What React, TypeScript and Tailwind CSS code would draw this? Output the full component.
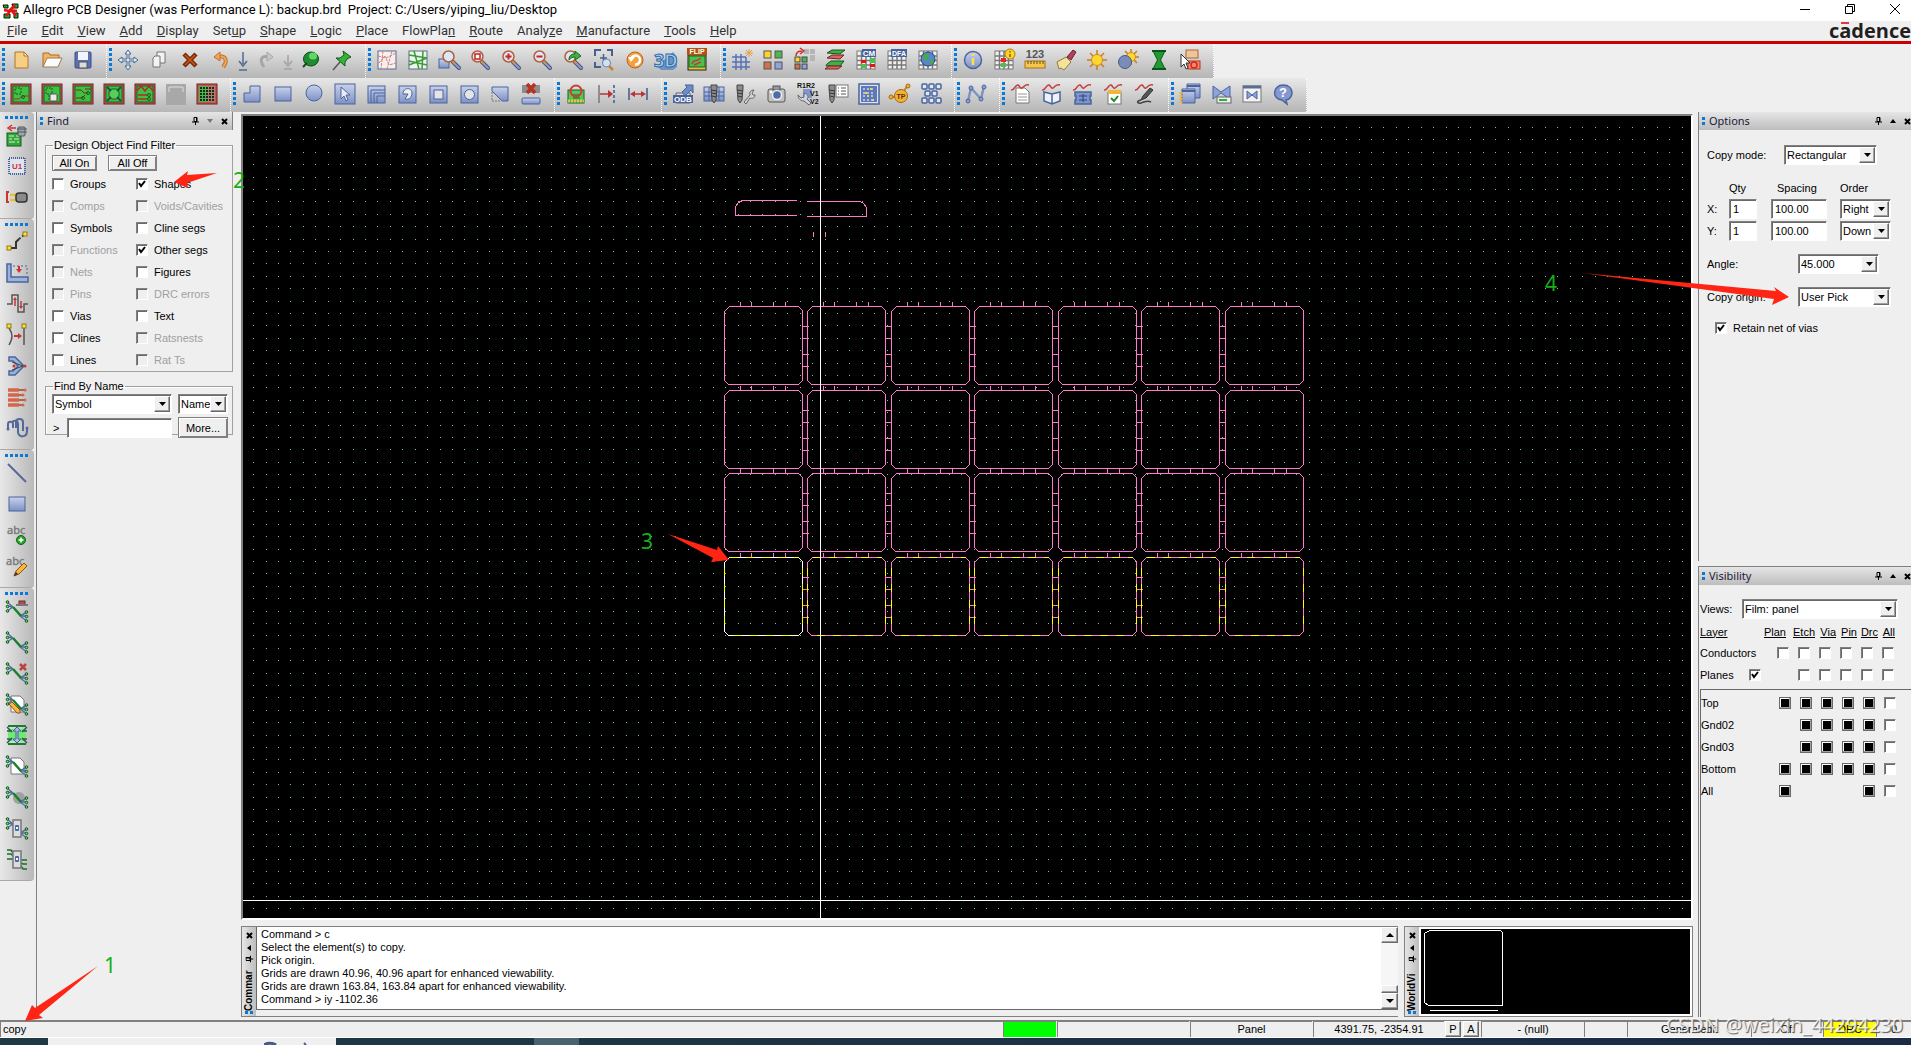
import React from "react";

type Glyph = React.ReactNode;

/* ------------------------------------------------------------------ */
/* Toolbar drawings, all on a 24x24 grid                               */
/* ------------------------------------------------------------------ */

const EDGE = "#4a659c";

const Magnifier = ({ children }: { children?: Glyph }) => (
  <>
    <path d="M14 14l6 6" stroke="#46557c" strokeWidth="4" strokeLinecap="round" />
    <path d="M14 14l6 6" stroke="#8d9ccc" strokeWidth="2" strokeLinecap="round" />
    <path d="M13 13l3 3" stroke="#e0903a" strokeWidth="2" />
    <circle cx="9.500" cy="8.500" r="5.500" fill="#dde6f6" stroke="#b3603a" strokeWidth="1.500" />
    {children}
  </>
);

const Board = ({ children }: { children?: Glyph }) => (
  <>
    <rect x="2" y="2" width="20" height="20" fill="#c25454" stroke="#6e2222" />
    <rect x="4" y="4" width="16" height="16" fill="#3fbf43" stroke="#17661a" />
    <g fill="none" stroke="#1a5c1c">
      {children}
    </g>
  </>
);

const BluePane = ({ children }: { children?: Glyph }) => (
  <>
    <rect x="4" y="4" width="17" height="17" fill="url(#blue)" stroke={EDGE} />
    {children}
  </>
);

const Grid = ({ children }: { children?: Glyph }) => (
  <>
    <rect x="3" y="3" width="18" height="18" fill="#f2f2f2" stroke="#777" />
    <path d="M3 8h18M3 12.500h18M3 17h18M7.500 3v18M12 3v18M16.500 3v18" stroke="#777" strokeWidth="1.500" fill="none" />
    {children}
  </>
);

const Wave = () => (
  <path d="M2 8c4 1 4-6 7-5 2 1 2 4 4 3 3-2 3-4 7-3" fill="none" stroke="#c43c3c" strokeWidth="1.500" />
);

const Cells = ({ x, y }: { x: number; y: number }) => (
  <rect x={x} y={y} width="5" height="5" rx="1" fill="#dfe6f8" stroke={EDGE} strokeWidth="1.500" />
);

const Tree = ({ children }: { children?: Glyph }) => (
  <>
    <path d="M2 3l6 5M2 7l6 1M2 12l6-4M22 13l-7 4M22 17h-7M22 22l-7-5" stroke="#5470a4" strokeWidth="1.500" fill="none" />
    <path d="M8 8l8 9" stroke="#17802a" strokeWidth="2.500" />
    <g fill="#5ee36c" stroke="#14551d">
      <circle cx="2.500" cy="3" r="1.300" />
      <circle cx="2.500" cy="7.500" r="1.300" />
      <circle cx="2.500" cy="12" r="1.300" />
      <circle cx="21.500" cy="13" r="1.300" />
      <circle cx="21.500" cy="17.500" r="1.300" />
      <circle cx="21.500" cy="22" r="1.300" />
    </g>
    {children}
  </>
);

const Screw = () => (
  <>
    <path d="M4 3h6v3l-1 12-2 3-2-3L4 6z" fill="#8c8c8c" stroke="#444" />
    <path d="M4 8l6 1M5 11l5 1M5 14l4 1" stroke="#333" />
  </>
);

const sheet = <path d="M6 4h9l4 4v12H6z" fill="#fff" stroke="#777" />;

const icons: Record<string, Glyph> = {
  new: (
    <>
      <path d="M6 4h9l4 4v12H6z" fill="#f6cf83" stroke="#b0752a" />
      <path d="M15 4v4h4z" fill="#fff3d6" stroke="#b0752a" />
    </>
  ),
  open: (
    <>
      <path d="M3 19V5h6l1 2h9v4" fill="#f2b566" stroke="#b06a1c" />
      <path d="M3 19l4-9h15l-4 9z" fill="#fbfbfb" stroke="#9a7a52" />
    </>
  ),
  save: (
    <>
      <rect x="4" y="4" width="16" height="16" rx="1" fill="#5a72b4" stroke="#3b4f87" />
      <rect x="7" y="4" width="10" height="8" fill="#f2f5fc" />
      <rect x="8" y="14" width="8" height="6" fill="#dcdcdc" stroke="#555" />
    </>
  ),
  move: (
    <g fill="#dbe8f5" stroke="#48698f">
      <path d="M12 2l3 4h-2v5h5V9l4 3-4 3v-2h-5v5h2l-3 4-3-4h2v-5H6v2l-4-3 4-3v2h5V6H9z" />
    </g>
  ),
  copy: (
    <g fill="#f3f3f3" stroke="#757575">
      <path d="M10 4h8v11h-8z" />
      <path d="M8 8h5v11H6v-9z" />
    </g>
  ),
  remove: (
    <>
      <path d="M6 6l12 12M18 6L6 18" stroke="#7c2a06" strokeWidth="4.500" fill="none" />
      <path d="M7 7l10 10M17 7L7 17" stroke="#c05a20" strokeWidth="1.500" fill="none" />
    </>
  ),
  undo: (
    <>
      <path d="M9 9c8-2 10 4 5 10" stroke="#c2702a" strokeWidth="4" fill="none" />
      <path d="M9 9c8-2 10 4 5 10" stroke="#f0a55c" strokeWidth="2" fill="none" />
      <path d="M5 9l6-5v9z" fill="#f0a55c" stroke="#c2702a" />
    </>
  ),
  down: <path d="M12 4v12M8 13l4 5 4-5M8 22h8" stroke="#4d6d90" strokeWidth="1.500" fill="none" />,
  redo: (
    <>
      <path d="M15 9C7 7 5 12 10 19" stroke="#a5a5a5" strokeWidth="3" fill="none" />
      <path d="M19 9l-6-5v9z" fill="#c9c9c9" stroke="#a5a5a5" />
    </>
  ),
  downOff: <path d="M12 7v9M8 13l4 5 4-5M8 21h8" stroke="#a3a3a3" strokeWidth="1.500" fill="none" />,
  pinDown: (
    <>
      <ellipse cx="12" cy="11" rx="7.500" ry="7" fill="#1f8d2f" stroke="#0a4c14" />
      <ellipse cx="14" cy="8" rx="4" ry="3.500" fill="#5ed868" />
      <path d="M4 19l4-4" stroke="#0a4c14" strokeWidth="2" />
    </>
  ),
  pin: (
    <>
      <path d="M3 22l7-8" stroke="#555" strokeWidth="1.500" />
      <path d="M13 3l8 6-2 1-1 0-3 4 0 4-9-8 4 0 4-3z" fill="#35b23c" stroke="#0d5c17" />
    </>
  ),
  unrats: (
    <>
      <rect x="3" y="3" width="18" height="18" fill="#f7eeee" stroke="#5b6b8c" />
      <path d="M3 8l8 2 10-5M4 15l6-7 4 9 7-2M8 3l-2 18M17 3l-5 18" stroke="#d08080" strokeDasharray="3 1" fill="none" />
    </>
  ),
  rats: (
    <>
      <rect x="3" y="3" width="18" height="18" fill="#eef5ea" stroke="#5b6b8c" />
      <path d="M3 7l18 3M3 17l18-7M8 3l5 18M17 3l-1 18M3 13l18 4" stroke="#3a9a3c" strokeWidth="1.500" fill="none" />
    </>
  ),
  zoomBox: (
    <>
      <rect x="2" y="11" width="10" height="9" fill="url(#blue)" stroke={EDGE} />
      <g transform="translate(2 0)">
        <Magnifier />
      </g>
    </>
  ),
  zoomFit: (
    <Magnifier>
      <rect x="7" y="6" width="5" height="5" fill="#fff" stroke="#c22" strokeWidth="1.500" />
    </Magnifier>
  ),
  zoomIn: (
    <Magnifier>
      <path d="M9.500 5.500v6M6.500 8.500h6" stroke="#c22" strokeWidth="2" />
    </Magnifier>
  ),
  zoomOut: (
    <Magnifier>
      <path d="M6.500 8.500h6" stroke="#c22" strokeWidth="2" />
    </Magnifier>
  ),
  zoomPrev: (
    <Magnifier>
      <path d="M8 12c0-5 3-6 6-6V3l6 5-6 4V9c-3 0-4 1-6 3z" fill="#3db246" stroke="#17661a" />
    </Magnifier>
  ),
  zoomCenter: (
    <>
      <path d="M3 8V2h6M15 2h5v6M3 14v5h6" stroke="#47618e" strokeWidth="2" fill="none" />
      <path d="M8 10h7M11.500 6v8" stroke="#47618e" strokeWidth="1.500" fill="none" />
      <path d="M17 18l4 4" stroke="#c7832e" strokeWidth="2.500" />
      <circle cx="14.500" cy="15" r="4" fill="#cfe3f6" stroke="#6c86a5" />
    </>
  ),
  refresh: (
    <>
      <circle cx="12" cy="12" r="8" fill="#f3a040" stroke="#bb6417" />
      <path d="M8 12a4.500 4.500 0 1 1 4 4.500" fill="none" stroke="#fff" strokeWidth="2.500" />
      <path d="M5 9h7l-4 5z" fill="#fff" />
    </>
  ),
  threeD: (
    <>
      <path d="M19 4l4 5v10l-4 3H7l-4-4z" fill="#6f92c4" />
      <text x="0" y="19" fontSize="18" fontWeight="700" fill="#a9d3f0" stroke="#2f6ba5" fontFamily="Open Sans, sans-serif">
        3D
      </text>
    </>
  ),
  flip: (
    <>
      <rect x="3" y="7" width="18" height="15" fill="#e8c13c" stroke="#222" />
      <rect x="4" y="8" width="16" height="11" fill="#4ac04f" stroke="#166a1b" />
      <path d="M7 16c1-5 5-2 9-6M9 17l7-3" stroke="#c23c3c" strokeWidth="1.500" fill="none" />
      <rect x="2" y="0" width="20" height="7" fill="#b5500f" />
      <text x="12" y="6" fontSize="7" fontWeight="700" fill="#fff" textAnchor="middle" fontFamily="Liberation Sans, sans-serif">
        FLIP
      </text>
    </>
  ),
  grid: (
    <>
      <path d="M6 6v16M11 6v16M16 9v13M2 9h14M2 14h18M2 19h18" stroke="#5672b5" strokeWidth="1.500" fill="none" />
      <path d="M19 1v8M15 5h8M16 2l6 6M22 2l-6 6" stroke="#e0a04a" />
    </>
  ),
  quad: (
    <g stroke="#555">
      <rect x="3" y="3" width="7" height="7" fill="#ffd42a" />
      <rect x="14" y="3" width="7" height="7" fill="#49b94d" />
      <rect x="3" y="14" width="7" height="7" fill="#d0714f" />
      <rect x="14" y="14" width="7" height="7" fill="#8ea3e0" />
    </g>
  ),
  quadMove: (
    <>
      <rect x="12" y="1" width="5" height="5" fill="#b5b5b5" />
      <rect x="18" y="1" width="5" height="5" fill="#b5b5b5" />
      <rect x="18" y="7" width="5" height="6" fill="#b5b5b5" />
      <g stroke="#444">
        <rect x="3" y="9" width="5" height="5" fill="#ffd42a" />
        <rect x="10" y="9" width="5" height="5" fill="#49b94d" />
        <rect x="3" y="16" width="5" height="5" fill="#d0714f" />
        <rect x="10" y="16" width="5" height="5" fill="#8ea3e0" />
      </g>
      <path d="M4 8c0-4 2-5 6-5M8 0l4 3-4 3" stroke="#c93434" strokeWidth="1.500" fill="none" />
    </>
  ),
  layers: (
    <>
      <path d="M4 5l5-3h13l-5 4zM4 16l4-3h13l-4 5H3z" fill="#3cb247" stroke="#17561b" />
      <path d="M4 10l5-3h12l-4 4zM2 21l4-3h13l-4 3z" fill="#d76565" stroke="#7c2222" />
    </>
  ),
  cm: (
    <Grid>
      <path d="M7 16h5v4H7zM16 10h5v5h-5z" fill="#4bc04f" />
      <path d="M7 12h5v3H7zM16 16h5v3h-5z" fill="#e11" />
      <rect x="8" y="1" width="14" height="8" fill="#47639d" />
      <text x="15" y="8" fontSize="8" fontWeight="700" fill="#fff" textAnchor="middle" fontFamily="Liberation Sans, sans-serif">
        CM
      </text>
    </Grid>
  ),
  dfa: (
    <Grid>
      <rect x="6" y="1" width="16" height="8" fill="#47639d" />
      <text x="14" y="8" fontSize="7" fontWeight="700" fill="#fff" textAnchor="middle" fontFamily="Liberation Sans, sans-serif">
        DFA
      </text>
    </Grid>
  ),
  globe: (
    <Grid>
      <circle cx="12" cy="11" r="7" fill="#5587c9" stroke="#25477c" />
      <path d="M8 6l4 0 1 4-4 3-2-3zM14 12l4 0-2 5-2-1z" fill="#48aa4d" />
    </Grid>
  ),
  info: (
    <>
      <circle cx="12" cy="12" r="8.500" fill="url(#blue)" stroke={EDGE} strokeWidth="1.500" />
      <path d="M12 6v2M12 10v7" stroke="#ffe23c" strokeWidth="2.500" />
    </>
  ),
  gridInfo: (
    <Grid>
      <path d="M9 10h5v4H9z" fill="#e22" />
      <path d="M9 15h5v4H9z" fill="#4bc04f" />
      <circle cx="18" cy="6" r="5" fill="#ffd42a" stroke="#b37a12" />
      <path d="M18 3v1.500M18 6v3" stroke="#8a5a00" strokeWidth="1.500" />
    </Grid>
  ),
  ruler: (
    <>
      <text x="12" y="10" fontSize="11" fontWeight="700" fill="#555" textAnchor="middle" fontFamily="Liberation Sans, sans-serif">
        123
      </text>
      <rect x="2" y="13" width="20" height="7" fill="#f6c54a" stroke="#a3741a" />
      <path d="M5 13v3M8 13v3M11 13v3M14 13v3M17 13v3M20 13v3" stroke="#6a4a0c" />
    </>
  ),
  brush: (
    <>
      <path d="M13 9l6-7 3 2-5 8z" fill="#b53e5e" stroke="#6d2038" />
      <path d="M3 14l9-5 5 5-7 8-3-2-2 1z" fill="#f4e39a" stroke="#92793a" />
    </>
  ),
  sun: (
    <>
      <path d="M12 2v20M2 12h20M5 5l14 14M19 5L5 19" stroke="#cf7a22" strokeWidth="1.500" />
      <circle cx="12" cy="12" r="5.500" fill="#ffd82e" stroke="#cf8a1a" />
    </>
  ),
  sunOff: (
    <>
      <path d="M15 1v16M7 9h16M9 3l12 12M21 3L9 15" stroke="#cf7a22" strokeWidth="1.500" />
      <circle cx="15" cy="9" r="4.500" fill="#ffd82e" stroke="#cf8a1a" />
      <circle cx="9" cy="14" r="6.500" fill="#7a8cba" stroke="#4b5978" />
    </>
  ),
  hourglass: (
    <>
      <path d="M6 3h12l-4.500 9L18 21H6l4.500-9z" fill="#1f9a33" stroke="#0a5517" />
      <path d="M5 3h14M5 21h14" stroke="#0a5517" strokeWidth="2" />
    </>
  ),
  pickOff: (
    <>
      <rect x="8" y="2" width="12" height="8" fill="#f0c49a" stroke="#a8672c" />
      <rect x="10" y="13" width="12" height="8" fill="#f38a6c" stroke="#b0371a" />
      <circle cx="16" cy="17" r="3" fill="none" stroke="#d22" strokeWidth="1.500" />
      <path d="M3 6v13l3-3 2 5 2-1-2-5h4z" fill="#fff" stroke="#333" />
    </>
  ),
  board1: (
    <Board>
      <path d="M6 6h6v6H6z" strokeDasharray="2 1" />
      <path d="M5 17h5l3-3h7" stroke="#a33" />
      <circle cx="14" cy="15" r="1.500" />
    </Board>
  ),
  board2: (
    <Board>
      <path d="M6 6h6v6H6z" strokeDasharray="2 1" />
      <path d="M8 14h10M8 17h10" />
      <rect x="10" y="12" width="7" height="7" rx="1" fill="#e9e9e9" stroke="#555" />
    </Board>
  ),
  board3: (
    <Board>
      <path d="M5 8h5l3 3h4M5 16h6l3-3M14 7h6" stroke="#7a2c1c" />
      <circle cx="17" cy="11" r="1.500" />
      <circle cx="12" cy="16" r="1.500" />
    </Board>
  ),
  board4: (
    <Board>
      <rect x="7" y="7" width="10" height="10" rx="3" fill="#57cf5b" />
      <path d="M5 5l4 4M19 5l-4 4M5 19l4-4M19 19l-4-4" strokeWidth="2" stroke="#2c4a50" />
    </Board>
  ),
  board5: (
    <Board>
      <path d="M4 9l4-5 4 5 4-5 4 5M5 13h10M5 17h10" stroke="#a82f2f" strokeWidth="1.500" />
      <circle cx="16" cy="13" r="1.500" />
      <circle cx="16" cy="17" r="1.500" />
    </Board>
  ),
  boardOff: (
    <>
      <rect x="2" y="2" width="20" height="21" fill="#a8a8a8" />
      <path d="M5 10V5h14v5" stroke="#dedede" fill="none" />
    </>
  ),
  board6: (
    <>
      <rect x="2" y="2" width="20" height="20" fill="#c25454" stroke="#6e2222" />
      <rect x="4" y="4" width="16" height="16" fill="#3fbf43" />
      <rect x="12" y="4" width="8" height="16" fill="#a78468" />
      <path d="M5 6h15M5 9h15M5 12h15M5 15h15M5 18h15" stroke="#222" strokeWidth="2" strokeDasharray="2 1" />
    </>
  ),
  polyShape: <path d="M4 20v-9h6V4h10v16z" fill="url(#blue)" stroke={EDGE} />,
  rectShape: <rect x="4" y="5" width="16" height="14" fill="url(#blue)" stroke={EDGE} />,
  circleShape: <circle cx="12" cy="11" r="8" fill="url(#blue)" stroke={EDGE} />,
  selectShape: (
    <>
      <rect x="2" y="2" width="20" height="20" fill="url(#blue)" stroke={EDGE} />
      <path d="M8 5v12l3-3 2 5 2-1-2-5h4z" fill="#e8ecf6" stroke={EDGE} />
    </>
  ),
  cornerShape: (
    <>
      <rect x="4" y="4" width="17" height="17" fill="url(#blue)" stroke={EDGE} />
      <path d="M7 21V8h14M10 21V11h11M13 21v-7h8" fill="none" stroke={EDGE} />
    </>
  ),
  voidPoly: (
    <BluePane>
      <path d="M8 12c0-7 9-7 9-1 0 5-4 7-7 6l3-5z" fill="#eee" stroke={EDGE} />
    </BluePane>
  ),
  voidRect: (
    <BluePane>
      <rect x="8" y="8" width="9" height="9" fill="#e4e4e4" stroke={EDGE} />
    </BluePane>
  ),
  voidCircle: (
    <BluePane>
      <circle cx="12.500" cy="12.500" r="5" fill="#e4e4e4" stroke={EDGE} />
    </BluePane>
  ),
  cutShape: (
    <>
      <path d="M4 5h16v14h-6L4 9z" fill="url(#blue)" stroke={EDGE} />
      <path d="M4 10v9h9" stroke="#777" strokeDasharray="2 1" fill="none" />
    </>
  ),
  deleteShape: (
    <>
      <rect x="3" y="3" width="18" height="8" fill="#8d8d8d" />
      <path d="M8 2l8 9M16 2l-8 9" stroke="#b63222" strokeWidth="3.500" />
      <rect x="3" y="16" width="18" height="6" rx="1" fill="url(#blue)" stroke={EDGE} />
    </>
  ),
  drc: (
    <>
      <rect x="4" y="8" width="16" height="13" fill="#57c55c" stroke="#17661a" />
      <path d="M4 19h16" stroke="#e8c13c" strokeWidth="3" strokeDasharray="2 1" />
      <path d="M8 13h8M9 16h7" stroke="#17661a" />
      <circle cx="12" cy="9" r="5.500" fill="none" stroke="#cc3b3b" strokeWidth="2" />
    </>
  ),
  dimEdge: (
    <>
      <path d="M4 3v18" stroke="#777" strokeWidth="1.500" />
      <path d="M19 3v18" stroke="#3f5a94" strokeWidth="1.500" strokeDasharray="3 2" />
      <path d="M5 12h9" stroke="#b33" strokeWidth="1.500" />
      <path d="M13 8l5 4-5 4z" fill="#b33" />
    </>
  ),
  dimSpan: (
    <>
      <path d="M3 6v12M21 6v12" stroke="#3f5a94" strokeWidth="1.500" />
      <path d="M7 12h10" stroke="#b33" strokeWidth="1.500" />
      <path d="M9 9l-5 3 5 3zM15 9l5 3-5 3z" fill="#b33" />
    </>
  ),
  odb: (
    <>
      <path d="M5 11h14v10H5z" fill="#ddd" stroke="#666" />
      <path d="M11 10l5-5-2-2h8v8l-2-3-6 6z" fill="#6d8cc4" stroke={EDGE} />
      <rect x="2" y="13" width="20" height="8" fill="#47639d" />
      <text x="12" y="20" fontSize="8" fontWeight="700" fill="#fff" textAnchor="middle" fontFamily="Liberation Sans, sans-serif">
        ODB
      </text>
    </>
  ),
  drillTable: (
    <>
      <rect x="2" y="5" width="20" height="14" fill="url(#blue)" stroke={EDGE} />
      <path d="M2 10h20M2 14h20M7 5v14M17 5v14" stroke={EDGE} />
      <g transform="translate(5 0)">
        <Screw />
      </g>
    </>
  ),
  drillTool: (
    <>
      <Screw />
      <path d="M11 20l6-7c-1-3 1-5 4-5l-2 3 1 2 2 0c0 3-3 4-5 3l-4 6z" fill="#ccd3de" stroke="#666" />
    </>
  ),
  camera: (
    <>
      <rect x="4" y="7" width="17" height="13" rx="2" fill="#c2c2c2" stroke="#555" />
      <rect x="9" y="4" width="7" height="4" fill="#999" stroke="#555" />
      <circle cx="13" cy="13" r="4.500" fill="#4d6ca8" stroke="#eee" strokeWidth="1.500" />
      <rect x="6" y="9" width="2" height="2" fill="#fff" />
    </>
  ),
  refdes: (
    <>
      <rect x="8" y="7" width="9" height="9" fill="#7f97cc" />
      <text x="11" y="6" fontSize="7" fontWeight="700" fill="#111" textAnchor="middle" fontFamily="Liberation Sans, sans-serif">
        R1R2
      </text>
      <text x="15" y="14" fontSize="7" fontWeight="700" fill="#111" fontFamily="Liberation Sans, sans-serif">
        V1
      </text>
      <text x="15" y="22" fontSize="7" fontWeight="700" fill="#111" fontFamily="Liberation Sans, sans-serif">
        V2
      </text>
      <path d="M3 13l3 3 3-1 0-4c4 1 5 4 3 6l4 4-2 2-5-4c-4 0-6-3-6-6z" fill="#ccd3de" stroke="#666" />
    </>
  ),
  drillLegend: (
    <>
      <g transform="translate(-1 0)">
        <Screw />
      </g>
      <rect x="10" y="3" width="12" height="12" fill="#fff" stroke="#777" />
      <path d="M12 6h1M15 6h5M12 9h1M15 9h5M12 12h1M15 12h5" stroke="#555" />
    </>
  ),
  panelGrid: (
    <>
      <rect x="2" y="2" width="20" height="20" fill="#dbe2f3" stroke={EDGE} strokeWidth="1.500" />
      <rect x="4" y="4" width="16" height="16" fill="#5d79b8" />
      <path d="M6 7h12M6 11h12M6 14h12M6 18h12" stroke="#cdd8f0" strokeWidth="1.500" strokeDasharray="2 2" />
      <path d="M8 11h2M13 7h2M10 14h2M15 18h2" stroke="#f3d34c" strokeWidth="2" />
    </>
  ),
  testPoint: (
    <>
      <path d="M2 15h5M16 9l4-6" stroke="#c8841a" strokeWidth="2" />
      <circle cx="3" cy="15" r="2" fill="#f4b13a" stroke="#a8670e" />
      <circle cx="20" cy="4" r="2" fill="#f4b13a" stroke="#a8670e" />
      <circle cx="13" cy="14" r="6.500" fill="#f4b13a" stroke="#a8670e" />
      <text x="13" y="17" fontSize="7" fontWeight="700" fill="#5a3300" textAnchor="middle" fontFamily="Liberation Sans, sans-serif">
        TP
      </text>
    </>
  ),
  cells: (
    <>
      <Cells x={3} y={2} />
      <Cells x={10} y={2} />
      <Cells x={17} y={2} />
      <Cells x={6} y={9} />
      <Cells x={13} y={9} />
      <Cells x={3} y={16} />
      <Cells x={10} y={16} />
      <Cells x={17} y={16} />
    </>
  ),
  net: (
    <>
      <path d="M4 19L7 6l10 11L20 4" stroke="#7e93c2" strokeWidth="2.500" fill="none" />
      <g fill="#8ea1d0" stroke={EDGE}>
        <circle cx="4" cy="19" r="2" />
        <circle cx="7" cy="6" r="2" />
        <circle cx="17" cy="17" r="2" />
        <circle cx="20" cy="5" r="2" />
      </g>
    </>
  ),
  waveSheet: (
    <>
      <path d="M7 6h9l4 4v11H7z" fill="#fff" stroke="#777" />
      <path d="M9 12h9M9 15h9M9 18h9" stroke="#999" />
      <Wave />
    </>
  ),
  waveBook: (
    <>
      <path d="M4 10l8 2 8-2v9l-8 3-8-3zM12 12v10" fill="#eef2fb" stroke={EDGE} strokeWidth="1.500" />
      <Wave />
    </>
  ),
  waveChip: (
    <>
      <path d="M4 10h16v4h-1v4h1v4H4v-4h1v-4H4z" fill="#7f94cc" stroke={EDGE} strokeWidth="1.500" />
      <path d="M8 14h8M8 18h8M12 12v8" stroke="#2d447a" />
      <Wave />
    </>
  ),
  waveCheck: (
    <>
      <rect x="6" y="10" width="13" height="12" fill="#fff" stroke="#777" />
      <path d="M6 10h13" stroke="#f0b83a" strokeWidth="4" />
      <path d="M9 16l3 3 4-5" stroke="#1c8a2b" strokeWidth="2" fill="none" />
      <Wave />
    </>
  ),
  waveProbe: (
    <>
      <path d="M20 8l-7 8-5 2 2-4 7-8z" fill="#555" stroke="#333" />
      <path d="M8 18c-5 1-4 4 0 3s6-3 10-1" stroke="#444" strokeWidth="1.500" fill="none" />
      <Wave />
    </>
  ),
  windows: (
    <g fill="url(#blue)" stroke={EDGE}>
      <path d="M9 2h13v14H9z" />
      <path d="M9 4h13" strokeWidth="2" />
      <path d="M4 7h13v14H4z" />
      <path d="M4 9h13" strokeWidth="2" />
      <path d="M3 10v11" stroke="#e8b43a" strokeWidth="3" strokeDasharray="2 1" />
    </g>
  ),
  bowtie: (
    <>
      <path d="M4 4l8 6 9-6v13l-9-6-8 6z" fill="#8ea3dc" stroke={EDGE} />
      <rect x="8" y="15" width="14" height="6" fill="#eee" stroke="#666" />
      <rect x="10" y="17" width="8" height="2" fill="#2eb23a" />
    </>
  ),
  bowtieBox: (
    <>
      <rect x="3" y="4" width="18" height="16" fill="#f2f2f2" stroke="#777" />
      <path d="M3 5h18" stroke="#5a6e94" strokeWidth="3" />
      <path d="M7 9l5 4 5-4v8l-5-4-5 4z" fill="#8ea3dc" stroke={EDGE} />
    </>
  ),
  help: (
    <>
      <path d="M12 3c12 0 11 14 3 15l1 4-5-4C0 17 2 3 12 3z" fill="#8498cf" stroke={EDGE} strokeWidth="1.500" />
      <text x="12" y="15" fontSize="13" fontWeight="700" fill="#fff" textAnchor="middle" fontFamily="Liberation Sans, sans-serif">
        ?
      </text>
    </>
  ),
  placeManual: (
    <>
      <rect x="2" y="10" width="14" height="13" fill="#35a63b" stroke="#155c19" />
      <path d="M4 13h5M11 13h3M4 16h3M9 16h5M4 19h6M12 19h2" stroke="#d4f5d4" />
      <rect x="13" y="4" width="7" height="9" rx="1" fill="#9aa6b4" stroke="#555" />
      <path d="M12 6h10M12 9h10" stroke="#555" />
      <path d="M11 5H5M7 2L3 5l4 3" stroke="#c33" strokeWidth="1.500" fill="none" />
    </>
  ),
  chip: (
    <>
      <rect x="4" y="4" width="16" height="16" fill="none" stroke={EDGE} strokeWidth="2" strokeDasharray="1 1" />
      <rect x="5" y="5" width="14" height="14" fill="#dfe4f0" />
      <text x="12" y="15" fontSize="8" fontWeight="700" fill="#c33" textAnchor="middle" fontFamily="Liberation Sans, sans-serif">
        U1
      </text>
    </>
  ),
  plug: (
    <>
      <path d="M4 7H2v10h2" stroke="#c33" strokeWidth="2" fill="none" />
      <path d="M5 10h7M5 15h7" stroke="#e8c13c" strokeWidth="2.500" />
      <rect x="11" y="8" width="11" height="9" rx="3" fill="#8a8a8a" stroke="#333" strokeWidth="1.500" />
    </>
  ),
  route: (
    <>
      <path d="M5 18h6V12l3-3" stroke="#333" strokeWidth="2" fill="none" />
      <path d="M14 9l6-5" stroke="#333" strokeWidth="2" strokeDasharray="2 2" />
      <rect x="2" y="16" width="4" height="4" fill="#ffe03a" stroke="#8f7a10" />
      <rect x="18" y="2" width="4" height="4" fill="#ffe03a" stroke="#8f7a10" />
    </>
  ),
  slide: (
    <>
      <path d="M2 3h4v13h17v5H2z" fill="#9db1dd" stroke={EDGE} strokeWidth="1.500" />
      <path d="M8 5h14v9" stroke={EDGE} strokeDasharray="2 2" fill="none" />
      <path d="M14 5v4" stroke="#c33" strokeWidth="2" />
      <path d="M11 8h6l-3 4z" fill="#c33" />
    </>
  ),
  delay: (
    <>
      <path d="M2 12h5V3h6v17h6v-8h4" stroke="#555" strokeWidth="1.500" fill="none" />
      <path d="M10 14V8M16 9v7" stroke="#c33" strokeWidth="1.500" />
      <path d="M8 8l2-3 2 3zM14 14l2 3 2-3z" fill="#c33" />
    </>
  ),
  spread: (
    <>
      <path d="M4 5c4 6 4 10 0 17M19 5v17" stroke="#555" strokeWidth="1.500" fill="none" />
      <path d="M9 13h5" stroke="#c33" strokeWidth="2" />
      <path d="M13 10l4 3-4 3z" fill="#c33" />
      <rect x="2" y="1" width="4" height="4" fill="#ffe03a" stroke="#8f7a10" />
      <rect x="17" y="1" width="4" height="4" fill="#ffe03a" stroke="#8f7a10" />
    </>
  ),
  miter: (
    <>
      <path d="M4 3h6l9 9-9 9H4v-4h4l5-5-5-5H4z" fill="#9db1dd" stroke={EDGE} strokeWidth="1.500" />
      <path d="M7 8l11 4-11 4" stroke="#444" fill="none" />
      <circle cx="9" cy="12" r="1.500" fill="#c33" />
      <circle cx="20" cy="12" r="1.500" fill="#c33" />
    </>
  ),
  bus: (
    <>
      <path d="M3 5h11M3 10h11M3 15h11M3 20h11" stroke="#d4674a" strokeWidth="3.500" />
      <path d="M14 5h6M14 10h4M14 15h6M14 20h4" stroke="#a84028" strokeWidth="1.500" />
      <circle cx="20" cy="5" r="1.500" fill="#d4674a" />
      <circle cx="18" cy="10" r="1.500" fill="#d4674a" />
      <circle cx="20" cy="15" r="1.500" fill="#d4674a" />
      <circle cx="18" cy="20" r="1.500" fill="#d4674a" />
    </>
  ),
  tune: (
    <>
      <path d="M3 12V8c0-3 5-3 5 0v4M22 12v3c0 7-9 7-9 1V8c0-4-5-4-5-2" stroke="#54699a" strokeWidth="2" fill="none" />
      <path d="M11 12V6c0-4 7-4 7 0v9" stroke="#54699a" strokeWidth="2" fill="none" />
      <circle cx="3" cy="13" r="1.500" fill="#54699a" />
      <circle cx="22" cy="12" r="1.500" fill="#54699a" />
    </>
  ),
  line: <path d="M3 3l18 18" stroke="#54699a" strokeWidth="2" />,
  rect: <rect x="4" y="5" width="16" height="14" fill="url(#blue)" stroke={EDGE} />,
  textAdd: (
    <>
      <text x="2" y="11" fontSize="11" fill="#7a7a7a" stroke="#7a7a7a" strokeWidth="0.400" fontFamily="Noto Sans, sans-serif">
        abc
      </text>
      <circle cx="16" cy="17" r="4.500" fill="#2aa32e" stroke="#156318" />
      <path d="M16 14.500v5M13.500 17h5" stroke="#fff" strokeWidth="1.500" />
    </>
  ),
  textEdit: (
    <>
      <text x="1" y="11" fontSize="11" fill="#7a7a7a" stroke="#7a7a7a" strokeWidth="0.400" fontFamily="Noto Sans, sans-serif">
        abc
      </text>
      <path d="M9 22l2-5 8-8 3 3-8 8z" fill="#f6b93a" stroke="#8f4d12" />
      <path d="M9 22l2-4 2 2z" fill="#333" />
    </>
  ),
  treeHat: (
    <Tree>
      <rect x="14" y="2" width="6" height="4" fill="#b0504e" stroke="#6d2c2a" />
      <path d="M11 6h12" stroke="#777" strokeWidth="2" />
    </Tree>
  ),
  tree: <Tree />,
  treeX: (
    <Tree>
      <path d="M15 3l6 6M21 3l-6 6" stroke="#b8443c" strokeWidth="2.500" />
    </Tree>
  ),
  treeEdit: (
    <>
      {sheet}
      <Tree>
        <path d="M4 12l3-2 8 8 0 3-3 0z" fill="#f6b93a" stroke="#a14a12" />
      </Tree>
    </>
  ),
  treeSwap: (
    <>
      <rect x="3" y="6" width="18" height="12" fill="#6fea72" />
      <path d="M3 3h18M3 21h18" stroke="#17802a" strokeWidth="2" />
      <path d="M2 4l5 5M2 8h5M22 4l-5 5M22 8h-5M2 20l5-5M2 16h5M22 20l-5-5M22 16h-5" stroke="#2d5a52" strokeWidth="1.500" />
      <path d="M12 4l4 4h-3v8h3l-4 4-4-4h3V8H8z" fill="#a9bbe0" stroke="#48639c" />
    </>
  ),
  treeSheet: (
    <>
      {sheet}
      <Tree />
    </>
  ),
  treeShade: (
    <>
      <circle cx="14" cy="13" r="6" fill="#a0a0a0" />
      <Tree />
    </>
  ),
  treeSwitch: (
    <Tree>
      <rect x="8" y="4" width="8" height="17" fill="#dcdcdc" stroke="#777" strokeWidth="1.500" />
      <rect x="10" y="9" width="4" height="6" rx="1" fill="#4769ad" />
      <path d="M12 11v2" stroke="#fff" strokeWidth="2" />
    </Tree>
  ),
  busSwitch: (
    <>
      <path d="M2 3h4l2 3M2 7h4l2 2M2 12h6M22 13h-6M22 17h-4l-2-1M22 22h-4l-2-3" stroke="#17702a" strokeWidth="1.500" fill="none" />
      <rect x="8" y="4" width="8" height="17" fill="#dcdcdc" stroke="#777" strokeWidth="1.500" />
      <rect x="10" y="9" width="4" height="6" rx="1" fill="#4769ad" />
      <path d="M12 11v2" stroke="#fff" strokeWidth="2" />
    </>
  ),
};

const NARROW = ["down", "downOff"];

const toolbarTop = [
  ["new", "open", "save"],
  ["move", "copy", "remove", "undo", "down", "redo", "downOff", "pinDown", "pin"],
  ["unrats", "rats", "zoomBox", "zoomFit", "zoomIn", "zoomOut", "zoomPrev", "zoomCenter", "refresh", "threeD", "flip"],
  ["grid", "quad", "quadMove", "layers", "cm", "dfa", "globe"],
  ["info", "gridInfo", "ruler", "brush", "sun", "sunOff", "hourglass", "pickOff"],
];

const toolbarBottom = [
  ["board1", "board2", "board3", "board4", "board5", "boardOff", "board6"],
  ["polyShape", "rectShape", "circleShape", "selectShape", "cornerShape", "voidPoly", "voidRect", "voidCircle", "cutShape", "deleteShape"],
  ["drc", "dimEdge", "dimSpan"],
  ["odb", "drillTable", "drillTool", "camera", "refdes", "drillLegend", "panelGrid", "testPoint", "cells"],
  ["net"],
  ["waveSheet", "waveBook", "waveChip", "waveCheck", "waveProbe"],
  ["windows", "bowtie", "bowtieBox", "help"],
];

const toolbarSide = [
  ["placeManual", "chip", "plug"],
  ["route", "slide", "delay", "spread", "miter", "bus", "tune"],
  ["line", "rect", "textAdd", "textEdit"],
  ["treeHat", "tree", "treeX", "treeEdit", "treeSwap", "treeSheet", "treeShade", "treeSwitch", "busSwitch"],
];

function ToolButton({ name }: { name: string }) {
  const width = NARROW.includes(name) ? "w-[14px]" : "w-[31px]";
  return (
    <button type="button" aria-label={name} className={`flex h-[31px] shrink-0 items-center justify-center ${width}`}>
      <svg viewBox="0 0 24 24" className="size-6 shrink-0 overflow-visible">
        {icons[name]}
      </svg>
    </button>
  );
}

function ToolRow({ groups }: { groups: string[][] }) {
  return (
    <div className="flex h-[34px]">
      {groups.map((group) => (
        <div
          key={group[0]}
          className="flex items-center border-r border-dotted border-white bg-linear-to-b from-[#e8e8e8] to-[#b6b6b6] pr-2 pb-[3px] pl-[2px]"
        >
          <span className="h-[23px] w-[3px] bg-[repeating-linear-gradient(to_bottom,#0a78d6_0_3px,transparent_3px_5px)]" />
          {group.map((name) => (
            <ToolButton key={name} name={name} />
          ))}
        </div>
      ))}
    </div>
  );
}

function SideTools() {
  return (
    <div className="flex w-[34px] shrink-0 flex-col">
      {toolbarSide.map((group) => (
        <div
          key={group[0]}
          className="flex flex-col items-center rounded-r-sm border-b border-[#a9a9a9] bg-linear-to-r from-[#e8e8e8] to-[#b9b9b9] pt-1 pr-px pb-[6px]"
        >
          <span className="h-[3px] w-[23px] bg-[repeating-linear-gradient(to_right,#0a78d6_0_3px,transparent_3px_5px)]" />
          {group.map((name) => (
            <ToolButton key={name} name={name} />
          ))}
        </div>
      ))}
    </div>
  );
}

/* ------------------------------------------------------------------ */
/* Classic form controls                                               */
/* ------------------------------------------------------------------ */

const SUNKEN = "border border-t-[#808080] border-l-[#808080] border-r-white border-b-white shadow-[inset_1px_1px_0_#696969]";
const RAISED = "border border-t-white border-l-white border-r-[#696969] border-b-[#696969] shadow-[inset_-1px_-1px_0_#a0a0a0]";

interface CheckProps {
  label: string;
  hideLabel?: boolean;
  checked?: boolean;
  disabled?: boolean;
}

function Check({ label, hideLabel, checked, disabled }: CheckProps) {
  return (
    <label className={`flex items-center gap-[6px] ${disabled ? "text-[#a0a0a0]" : ""}`}>
      <span className="relative flex size-3 shrink-0">
        <input
          type="checkbox"
          aria-label={hideLabel ? label : undefined}
          defaultChecked={checked}
          disabled={disabled}
          className={`peer size-3 appearance-none bg-white disabled:bg-[#efefef] ${SUNKEN}`}
        />
        <svg viewBox="0 0 12 12" className="pointer-events-none absolute inset-0 hidden size-3 peer-checked:block">
          <path d="M3 5l2 3 4-5" stroke="#000" strokeWidth="2" fill="none" />
        </svg>
      </span>
      {!hideLabel && <span className="whitespace-nowrap">{label}</span>}
    </label>
  );
}

function Combo({ label, value, className }: { label: string; value: string; className: string }) {
  return (
    <span className={`relative flex h-5 bg-white ${SUNKEN} ${className}`}>
      <select aria-label={label} defaultValue={value} className="w-full appearance-none pl-[2px] outline-none">
        <option>{value}</option>
      </select>
      <span className={`pointer-events-none absolute inset-y-px right-px flex w-4 items-center justify-center bg-[#efefef] ${RAISED}`}>
        <svg viewBox="0 0 7 4" className="h-1 w-[7px]">
          <path d="M0 0h7L3.500 4z" />
        </svg>
      </span>
    </span>
  );
}

function Field({ label, value, className }: { label: string; value: string; className: string }) {
  return <input aria-label={label} defaultValue={value} className={`h-5 bg-white px-[3px] outline-none ${SUNKEN} ${className}`} />;
}

function PushButton({ children, className }: { children: React.ReactNode; className: string }) {
  return (
    <button type="button" className={`border border-[#808080] bg-[#efefef] shadow-[inset_1px_1px_0_#fff,inset_-1px_-1px_0_#808080] ${className}`}>
      {children}
    </button>
  );
}

function PinGlyph() {
  return (
    <svg viewBox="0 0 7 8" className="h-2 w-[7px]">
      <path d="M2 .5h3v4H2zM4.500 0v5M0 5h7M3.500 5v3" stroke="#000" fill="none" />
    </svg>
  );
}

function CloseGlyph() {
  return (
    <svg viewBox="0 0 7 7" className="size-[7px]">
      <path d="M1 1l5 5M6 1L1 6" stroke="#000" strokeWidth="2" />
    </svg>
  );
}

function PanelHeader({ title, open }: { title: string; open?: boolean }) {
  return (
    <header
      className={`flex h-[18px] shrink-0 items-center bg-linear-to-b from-[#e6e6e6] to-[#bdbdbd] pl-[3px] font-['Noto_Sans',sans-serif] ${open ? "" : "pr-1"}`}
    >
      <span className="mr-1 h-2 w-[3px] bg-[repeating-linear-gradient(to_bottom,#0a78d6_0_3px,transparent_3px_5px)]" />
      <h2 className="flex-1 text-[11px] leading-4 text-[#1a1a3a]">{title}</h2>
      <div className="flex items-center gap-2">
        <button type="button" aria-label="Pin">
          <PinGlyph />
        </button>
        <button type="button" aria-label="Collapse">
          <svg viewBox="0 0 6 4" className="h-1 w-[6px]">
            <path d={open ? "M0 4h6L3 0z" : "M0 0h6L3 4z"} fill={open ? "#000" : "#777"} />
          </svg>
        </button>
        <button type="button" aria-label="Close">
          <CloseGlyph />
        </button>
      </div>
    </header>
  );
}

/* ------------------------------------------------------------------ */
/* Find panel                                                          */
/* ------------------------------------------------------------------ */

const filters: [CheckProps, CheckProps][] = [
  [{ label: "Groups" }, { label: "Shapes", checked: true }],
  [{ label: "Comps", disabled: true }, { label: "Voids/Cavities", disabled: true }],
  [{ label: "Symbols" }, { label: "Cline segs" }],
  [{ label: "Functions", disabled: true }, { label: "Other segs", checked: true }],
  [{ label: "Nets", disabled: true }, { label: "Figures" }],
  [{ label: "Pins", disabled: true }, { label: "DRC errors", disabled: true }],
  [{ label: "Vias" }, { label: "Text" }],
  [{ label: "Clines" }, { label: "Ratsnests", disabled: true }],
  [{ label: "Lines" }, { label: "Rat Ts", disabled: true }],
];

function FindPanel() {
  return (
    <aside className="mr-2 ml-[2px] w-[197px] shrink-0 border-l border-[#808080]">
      <div className="border-r border-[#808080]">
        <PanelHeader title="Find" />
      </div>
      <div className="flex flex-col gap-[7px] pt-2 pl-2">
        <fieldset className="border border-[#a0a0a0] pr-1 pl-[6px] shadow-[inset_1px_1px_0_#fff]">
          <legend className="ml-[1px] px-px leading-[14px]">Design Object Find Filter</legend>
          <div className="flex gap-[11px] pt-[3px]">
            <PushButton className="h-4 w-[45px] leading-3">All On</PushButton>
            <PushButton className="h-4 w-[49px] leading-3">All Off</PushButton>
          </div>
          <div className="grid grid-cols-[84px_1fr] pt-[2px]">
            {filters.flat().map((item) => (
              <div key={item.label} className="flex h-[22px] items-center">
                <Check {...item} />
              </div>
            ))}
          </div>
        </fieldset>
        <fieldset className="border border-[#a0a0a0] pr-1 pl-[6px] shadow-[inset_1px_1px_0_#fff]">
          <legend className="ml-[1px] px-px leading-[14px]">Find By Name</legend>
          <div className="flex gap-[6px] pt-px">
            <Combo label="Object type" value="Symbol" className="w-[120px]" />
            <Combo label="Match by" value="Name" className="w-[50px]" />
          </div>
          <div className="-mb-1 flex items-center pt-[3px]">
            <span className="w-[15px] pl-px">&gt;</span>
            <Field label="Name" value="" className="w-[105px]" />
            <PushButton className="ml-[6px] h-[21px] w-[50px]">More...</PushButton>
          </div>
        </fieldset>
      </div>
    </aside>
  );
}

/* ------------------------------------------------------------------ */
/* Design canvas                                                       */
/* ------------------------------------------------------------------ */

const PINK = "#ff7ac8";
const COL_X = [481, 564, 648, 731, 815, 898, 982];
const ROW_Y = [190, 274, 357, 441];
const TICKS_X = [16, 27, 49, 61];
const TICKS_Y = [20, 32, 48, 60];

function gridDots() {
  let d = "";
  for (let row = 0; row < 66; row++) {
    for (let col = 0; col < 117; col++) {
      d += `M${Math.round(10.2 + col * 12.42)} ${Math.round(11 + row * 12.4)}h1v1h-1z`;
    }
  }
  return d;
}

function cellPath(x: number, y: number) {
  return `M${x + 5} ${y}h69l4 4v70l-4 4h-70l-4-4v-69z`;
}

function DesignCanvas() {
  let outlines = "";
  let ticks = "";
  let dashes = "";
  ROW_Y.forEach((y, row) => {
    COL_X.forEach((x, col) => {
      outlines += cellPath(x, y);
      TICKS_X.forEach((t) => (ticks += `M${x + t} ${y - 5}v5`));
      if (col < COL_X.length - 1) {
        TICKS_Y.forEach((t) => (ticks += `M${x + 78} ${y + t}h6`));
      }
      if (row === ROW_Y.length - 1) {
        dashes += `M${x + 5} ${y}h69M${x} ${y + 10}v58M${x + 78} ${y + 10}v58M${x + 9} ${y + 78}h65`;
      }
    });
  });

  return (
    <div className="min-h-0 flex-1 border-2 border-t-[#808080] border-l-[#808080] border-r-white border-b-white bg-black">
      <svg className="block size-full" shapeRendering="crispEdges">
        <path d={gridDots()} fill="#76c490" />
        <g fill="none" stroke={PINK} transform="translate(.5 .5)">
          <path d="M553 84h-54l-4 2-3 4v9h61M563 85h54l3 2 3 4v9h-60M570 115v5M582 115v5" />
          <path d={outlines} />
          <path d={ticks} />
          <path d={cellPath(COL_X[0], ROW_Y[3])} stroke="#fff" />
          <path d={dashes} stroke="#ff0" strokeDasharray="8 8" />
        </g>
        <line x1="577.5" y1="0" x2="577.5" y2="100%" stroke="#fff" />
        <line x1="0" y1="784.5" x2="100%" y2="784.5" stroke="#fff" />
      </svg>
    </div>
  );
}

/* ------------------------------------------------------------------ */
/* Docked windows below the canvas                                     */
/* ------------------------------------------------------------------ */

const log = [
  "Command > c",
  "Select the element(s) to copy.",
  "Pick origin.",
  "Grids are drawn 40.96, 40.96 apart for enhanced viewability.",
  "Grids are drawn 163.84, 163.84 apart for enhanced viewability.",
  "Command > iy -1102.36",
];

function DockStrip({ title }: { title: string }) {
  return (
    <div className="flex w-[14px] shrink-0 flex-col items-center bg-linear-to-r from-[#e6e6e6] to-[#bdbdbd] pt-[5px] pb-[2px]">
      <button type="button" aria-label="Close">
        <CloseGlyph />
      </button>
      <svg viewBox="0 0 4 6" className="mt-[6px] h-[6px] w-1 shrink-0">
        <path d="M4 0v6L0 3z" />
      </svg>
      <span className="mt-1 rotate-270">
        <PinGlyph />
      </span>
      <h2 className="flex-1 rotate-180 text-[10px] leading-3 font-bold whitespace-nowrap [writing-mode:vertical-rl]">{title}</h2>
      <span className="h-[3px] w-2 shrink-0 bg-[repeating-linear-gradient(to_right,#0a78d6_0_3px,transparent_3px_5px)]" />
    </div>
  );
}

function BottomDock() {
  return (
    <div className="flex h-[97px] shrink-0 gap-[6px] pt-[6px]">
      <section className="flex min-w-0 flex-1 border border-r-0 border-[#808080]">
        <DockStrip title="Commar" />
        <div className="mb-[6px] flex min-w-0 flex-1 border-b border-l border-[#696969] bg-white">
          <div className="flex-1 pt-px pl-1 leading-[13px]">
            {log.map((line) => (
              <p key={line}>{line}</p>
            ))}
          </div>
          <div className="flex w-[17px] flex-col bg-[#f6f6f6]">
            <button type="button" aria-label="Scroll up" className={`flex h-4 items-center justify-center bg-[#efefef] ${RAISED}`}>
              <svg viewBox="0 0 8 4" className="h-1 w-2">
                <path d="M0 4h8L4 0z" />
              </svg>
            </button>
            <span className="flex-1" />
            <span className={`h-2 bg-[#efefef] ${RAISED}`} />
            <button type="button" aria-label="Scroll down" className={`flex h-4 items-center justify-center bg-[#efefef] ${RAISED}`}>
              <svg viewBox="0 0 8 4" className="h-1 w-2">
                <path d="M0 0h8L4 4z" />
              </svg>
            </button>
          </div>
        </div>
      </section>
      <section className="flex w-[289px] shrink-0 border border-[#808080]">
        <DockStrip title="WorldVi" />
        <div className="flex-1 border-2 border-white bg-black">
          <svg className="block size-full" shapeRendering="crispEdges">
            <path d="M8.500 1.500h71l2 2v73h-74l-4-3v-69z" fill="none" stroke="#fff" />
            <path d="M9 81.500h68" stroke="#fff" />
          </svg>
        </div>
      </section>
    </div>
  );
}

/* ------------------------------------------------------------------ */
/* Options and Visibility panels                                       */
/* ------------------------------------------------------------------ */

function OptionsPanel() {
  return (
    <section className="h-[449px] border-l border-[#808080]">
      <PanelHeader title="Options" open />
      <div className="pl-2">
        <div className="flex items-center pt-[15px]">
          <span className="w-[77px]">Copy mode:</span>
          <Combo label="Copy mode" value="Rectangular" className="w-[93px]" />
        </div>
        <div className="grid grid-cols-[22px_42px_69px_51px] items-center gap-y-[2px] pt-4">
          <span className="pb-[2px]" />
          <span className="pb-[2px]">Qty</span>
          <span className="pb-[2px] pl-[6px]">Spacing</span>
          <span className="pb-[2px]">Order</span>
          <span>X:</span>
          <Field label="X quantity" value="1" className="w-7" />
          <Field label="X spacing" value="100.00" className="w-14" />
          <Combo label="X order" value="Right" className="w-[51px]" />
          <span>Y:</span>
          <Field label="Y quantity" value="1" className="w-7" />
          <Field label="Y spacing" value="100.00" className="w-14" />
          <Combo label="Y order" value="Down" className="w-[51px]" />
        </div>
        <div className="flex items-center pt-[13px]">
          <span className="w-[91px]">Angle:</span>
          <Combo label="Angle" value="45.000" className="w-[81px]" />
        </div>
        <div className="flex items-center pt-[13px]">
          <span className="w-[91px]">Copy origin:</span>
          <Combo label="Copy origin" value="User Pick" className="w-[93px]" />
        </div>
        <div className="pt-[14px] pl-2">
          <Check label="Retain net of vias" checked />
        </div>
      </div>
    </section>
  );
}

const LAYER_COLS = ["Plan", "Etch", "Via", "Pin", "Drc", "All"];

const layers = [
  { name: "Top", plan: true, signal: true },
  { name: "Gnd02", plan: false, signal: true },
  { name: "Gnd03", plan: false, signal: true },
  { name: "Bottom", plan: true, signal: true },
  { name: "All", plan: true, signal: false },
];

function Swatch({ label }: { label: string }) {
  return (
    <button type="button" aria-label={label} className="flex size-3 items-center justify-center border border-[#696969] bg-[#a0a0a0]">
      <span className="mr-px mb-px size-[9px] border-t border-l border-white bg-black" />
    </button>
  );
}

function LayerCols() {
  return (
    <colgroup>
      <col className="w-[49px]" />
      <col className="w-[28px]" />
      {LAYER_COLS.map((name) => (
        <col key={name} className="w-[21px]" />
      ))}
    </colgroup>
  );
}

function VisibilityPanel() {
  const hasSwatch = (layer: (typeof layers)[number], col: string) =>
    col === "Plan" ? layer.plan : col === "Drc" ? true : col !== "All" && layer.signal;

  return (
    <section className="flex flex-1 flex-col border-t border-l border-[#808080]">
      <PanelHeader title="Visibility" open />
      <div className="flex items-center pt-[14px] pl-px">
        <span className="w-[42px]">Views:</span>
        <Combo label="Views" value="Film: panel" className="w-[156px]" />
      </div>
      <table className="mt-[2px] ml-px w-[203px] table-fixed">
        <LayerCols />
        <thead>
          <tr className="h-[21px]">
            <th className="text-left font-normal underline">Layer</th>
            <th colSpan={2} className="pr-3 text-right font-normal underline">
              Plan
            </th>
            {LAYER_COLS.slice(1).map((name) => (
              <th key={name} className="font-normal">
                <span className={`flex justify-end underline ${name === "All" ? "pr-2" : "pr-1"}`}>{name}</span>
              </th>
            ))}
          </tr>
        </thead>
        <tbody>
          <tr className="h-[22px]">
            <th className="text-left font-normal">Conductors</th>
            <td />
            {LAYER_COLS.map((name) => (
              <td key={name}>
                <Check label={`Conductors ${name}`} hideLabel />
              </td>
            ))}
          </tr>
          <tr className="h-[22px]">
            <th className="text-left font-normal">Planes</th>
            <td>
              <Check label="Planes" hideLabel checked />
            </td>
            <td />
            {LAYER_COLS.slice(1).map((name) => (
              <td key={name}>
                <Check label={`Planes ${name}`} hideLabel />
              </td>
            ))}
          </tr>
        </tbody>
      </table>
      <div className="mt-[3px] ml-px flex-1 border-t border-l border-[#696969] pt-[2px]">
        <table className="w-[203px] table-fixed">
          <LayerCols />
          <tbody>
            {layers.map((layer) => (
              <tr key={layer.name} className="h-[22px]">
                <th className="text-left font-normal">{layer.name}</th>
                <td />
                {LAYER_COLS.map((col) => (
                  <td key={col} className="pl-px">
                    {hasSwatch(layer, col) && <Swatch label={`${layer.name} ${col}`} />}
                    {col === "All" && <Check label={`${layer.name} all`} hideLabel />}
                  </td>
                ))}
              </tr>
            ))}
          </tbody>
        </table>
      </div>
    </section>
  );
}

/* ------------------------------------------------------------------ */
/* Window frame                                                        */
/* ------------------------------------------------------------------ */

// label and position of the underlined mnemonic
const menus: [string, number][] = [
  ["File", 0],
  ["Edit", 0],
  ["View", 0],
  ["Add", 0],
  ["Display", 0],
  ["Setup", 3],
  ["Shape", 0],
  ["Logic", 0],
  ["Place", 0],
  ["FlowPlan", 7],
  ["Route", 0],
  ["Analyze", 5],
  ["Manufacture", 0],
  ["Tools", 0],
  ["Help", 0],
];

function TitleBar() {
  return (
    <header className="flex h-[21px] shrink-0 items-center bg-white pr-[11px] pl-[2px]">
      <svg viewBox="0 0 17 17" className="size-[17px]">
        <path d="M1 3h5v3H2zM10 2h6v4h-5zM2 12h6v4H2zM12 11h4v5h-4z" fill="#14b814" stroke="#111" />
        <path d="M2 8l5 1 6-6M4 14l5-6 5 6M8 8l7 1" stroke="#e01515" strokeWidth="2.500" fill="none" />
      </svg>
      <h1 className="ml-1 flex-1 pb-px font-['Roboto',sans-serif] text-[13px] leading-4 whitespace-pre">
        Allegro PCB Designer (was Performance L): backup.brd  Project: C:/Users/yiping_liu/Desktop
      </h1>
      <div className="flex items-center gap-[35px] pb-[3px]">
        <button type="button" aria-label="Minimize">
          <svg viewBox="0 0 10 10" className="size-[10px]">
            <path d="M0 5.500h10" stroke="#000" />
          </svg>
        </button>
        <button type="button" aria-label="Restore">
          <svg viewBox="0 0 10 10" className="size-[10px]">
            <path d="M.5 2.500h7v7h-7zM2.500 2.500v-2h7v7h-2" stroke="#000" fill="none" />
          </svg>
        </button>
        <button type="button" aria-label="Close">
          <svg viewBox="0 0 10 10" className="size-[10px]">
            <path d="M0 0l10 10M10 0L0 10" stroke="#000" />
          </svg>
        </button>
      </div>
    </header>
  );
}

function MenuBar() {
  return (
    <nav className="flex h-[23px] shrink-0 items-center justify-between border-b-[3px] border-[#cc0000]">
      <div className="flex gap-[14px] pl-[7px] font-['Roboto',sans-serif] text-[13px] leading-4 text-[#333]">
        {menus.map(([label, key]) => (
          <button key={label} type="button">
            {label.slice(0, key)}
            <u>{label[key]}</u>
            {label.slice(key + 1)}
          </button>
        ))}
      </div>
      <span className="flex h-5 font-['Open_Sans',sans-serif] text-[20px] leading-5 font-bold text-[#231f20]">
        c
        <span className="relative">
          a<span className="absolute top-px left-[2px] h-[2px] w-2 bg-[#e0393e]" />
        </span>
        dence
      </span>
    </nav>
  );
}

function StatusBar() {
  const cell = "flex items-start justify-center border-t border-l border-[#808080] leading-[14px]";
  return (
    <footer className="flex h-[18px] shrink-0 border-t border-b border-[#808080] border-b-white">
      <span className={`flex-1 justify-start! pl-[2px] ${cell}`}>copy</span>
      <span className={`w-[53px] bg-[#00ff00] ${cell}`} />
      <span className={`ml-px w-[132px] ${cell}`} />
      <span className={`ml-px w-[122px] ${cell}`}>Panel</span>
      <span className={`ml-px w-[131px] ${cell}`}>4391.75, -2354.91</span>
      <button type="button" className={`ml-px w-4 bg-[#efefef] leading-3 ${RAISED}`}>
        P
      </button>
      <button type="button" className={`ml-[2px] w-4 bg-[#efefef] leading-3 ${RAISED}`}>
        A
      </button>
      <span className={`ml-[2px] w-[103px] ${cell}`}>- (null)</span>
      <span className={`w-[43px] ${cell}`} />
      <span className={`w-[124px] ${cell}`}>Generaledit</span>
      <span className={`w-[72px] ${cell}`}>Off</span>
      <span className={`w-[53px] bg-[#ffff00] ${cell}`}>DRC</span>
      <span className={`w-[35px] ${cell}`}>0</span>
    </footer>
  );
}

function Taskbar() {
  return (
    <div className="flex h-[7px] shrink-0 bg-linear-to-r from-[#1f3a44] to-[#1b2a45]">
      <div className="ml-12 flex w-72 justify-end overflow-hidden bg-[#f0f0f0] pr-3">
        <svg viewBox="0 0 60 7" className="h-[7px] w-[60px]">
          <path d="M0 7a8 5 0 0 1 12 0" stroke="#44598c" strokeWidth="3" fill="none" />
          <path d="M40 5l2 2" stroke="#44598c" strokeWidth="2" />
        </svg>
      </div>
      <div className="ml-[198px] w-[45px] bg-[#4a626e]" />
    </div>
  );
}

/* Red arrows and step numbers drawn over the whole window */
function StepMarks() {
  return (
    <svg className="pointer-events-none absolute inset-0 size-full font-['Noto_Sans',sans-serif]">
      <g fill="#ff2413">
        <path d="M98 966L35 1008l-3-3-7 16 18-3-4-3z" />
        <path d="M217 173l-30 2 1-4-14 11 14 6-1-5z" />
        <path d="M668 534l49 16 1-4 11 14-18 2 2-4z" />
        <path d="M1582 273l194 18-2-4 15 10-17 8 2-6z" />
      </g>
      <g fill="#16b016" fontSize="21">
        <text x="104" y="973">
          1
        </text>
        <text x="233" y="188">
          2
        </text>
        <text x="641" y="549">
          3
        </text>
        <text x="1545" y="291">
          4
        </text>
      </g>
    </svg>
  );
}

export default function App() {
  return (
    <div className="relative flex h-screen flex-col overflow-hidden bg-[#efefef] font-['Liberation_Sans',Arial,sans-serif] text-[11px] leading-[14px] text-black">
      <svg className="absolute size-0">
        <linearGradient id="blue" x1="0" y1="0" x2="0" y2="1">
          <stop offset="0" stopColor="#c9d2ec" />
          <stop offset="1" stopColor="#7d90c6" />
        </linearGradient>
      </svg>
      <TitleBar />
      <MenuBar />
      <div className="shrink-0">
        <ToolRow groups={toolbarTop} />
        <ToolRow groups={toolbarBottom} />
      </div>
      <main className="flex min-h-0 flex-1">
        <SideTools />
        <FindPanel />
        <div className="flex min-w-0 flex-1 flex-col pt-[2px]">
          <DesignCanvas />
          <BottomDock />
        </div>
        <div className="ml-[5px] flex w-[213px] shrink-0 flex-col gap-[5px]">
          <OptionsPanel />
          <VisibilityPanel />
        </div>
      </main>
      <div className="h-[3px] shrink-0" />
      <StatusBar />
      <Taskbar />
      <StepMarks />
      <span className="absolute right-2 bottom-2 font-['Noto_Sans',sans-serif] text-[20px] leading-6 text-white/80 [text-shadow:1px_1px_1px_#555]">
        CSDN @weixin_44294230
      </span>
    </div>
  );
}
